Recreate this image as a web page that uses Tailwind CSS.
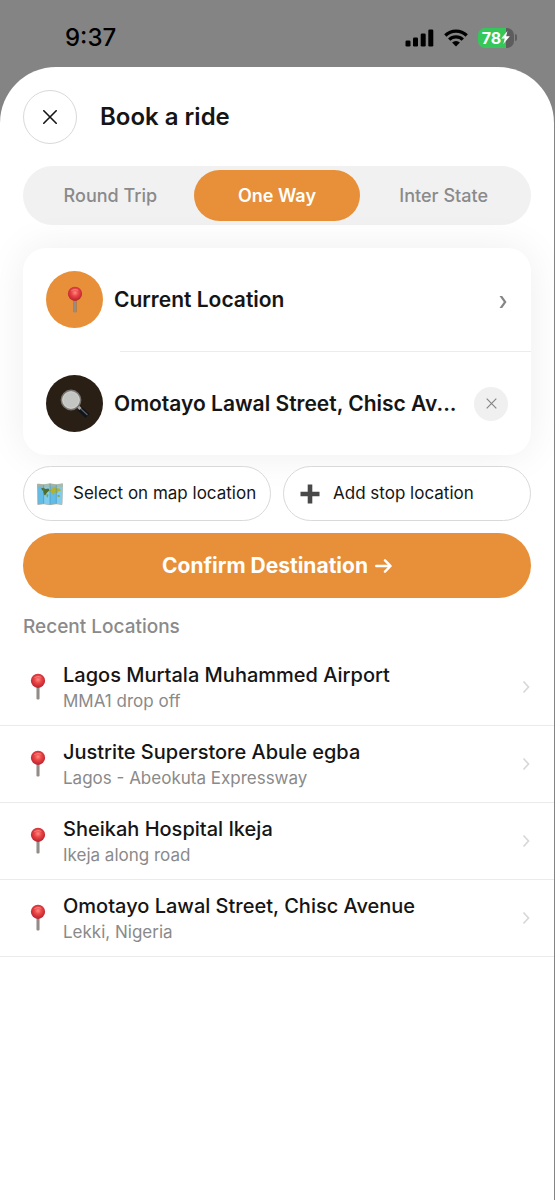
<!DOCTYPE html>
<html lang="en">
<head>
<meta charset="utf-8">
<meta name="viewport" content="width=device-width, initial-scale=1">
<title>Book a ride</title>
<script src="https://cdn.jsdelivr.net/npm/@tailwindcss/browser@4"></script>
</head>
<body class="bg-[#848484] font-['Inter','Liberation_Sans',sans-serif] text-[#151515] antialiased">
<svg class="absolute size-0" aria-hidden="true">
  <defs>
    <radialGradient id="ball" cx="0.5" cy="0.42" r="0.6">
      <stop offset="0" stop-color="#ff8a80"/><stop offset="0.4" stop-color="#ec4747"/><stop offset="1" stop-color="#b51d2c"/>
    </radialGradient>
    <linearGradient id="needle" x1="0" x2="1" y1="0" y2="0">
      <stop offset="0" stop-color="#6e6763"/><stop offset="0.5" stop-color="#aaa29c"/><stop offset="1" stop-color="#6a625e"/>
    </linearGradient>
    <symbol id="pin" viewBox="0 0 16 28">
      <rect x="6.6" y="12" width="2.8" height="14.500" rx="0.8" fill="url(#needle)"/>
      <circle cx="8" cy="7.800" r="7.100" fill="url(#ball)"/>
      <path d="M4.6 4.500Q8 2 11 4.100" fill="none" stroke="#ffb3ab" stroke-width="1" stroke-linecap="round" opacity="0.5"/>
    </symbol>
    <symbol id="chevron" viewBox="0 0 10 14">
      <path d="M2.500 1.500L7.500 7l-5 5.500" fill="none" stroke="currentColor" stroke-width="1.700"/>
    </symbol>
  </defs>
</svg>
<div class="flex min-h-screen flex-col">
  <header class="flex h-[67px] items-center justify-between pt-2 pr-[38px] pl-[65px] text-black">
    <time class="text-2xl font-medium">9:37</time>
    <div class="flex items-center gap-[10px]">
      <svg class="h-[18px] w-[29px]" viewBox="0 0 29 18" fill="currentColor" aria-label="Signal"><rect x="0.500" y="11.500" width="5" height="6" rx="1.300"/><rect x="8" y="8.500" width="5" height="9" rx="1.300"/><rect x="15.700" y="4.500" width="5" height="13" rx="1.300"/><rect x="23.300" y="0.500" width="5" height="17" rx="1.300"/></svg>
      <svg class="h-[18px] w-6" viewBox="0 0 24 18" aria-label="Wi-Fi"><path d="M1.300 6.500a15.300 15.300 0 0 1 21.400 0M5.200 10.600a9.700 9.700 0 0 1 13.600 0" fill="none" stroke="currentColor" stroke-width="3.300"/><path d="M8.100 13.500a5.500 5.500 0 0 1 7.800 0L12 17.500Z" fill="currentColor"/></svg>
      <div class="flex items-center gap-px">
        <div class="flex h-5 w-9 items-center justify-center rounded-[7px] bg-linear-to-r from-[#35c759] from-78% to-[#5d5d5d] to-78% text-base font-bold text-white">78<svg class="h-[13px] w-[9px]" viewBox="0 0 8 12" fill="currentColor" aria-hidden="true"><path d="M5.800 0L0 7h3.300L2 12l6-7.200H4.600Z"/></svg></div>
        <div class="h-[7px] w-[2px] rounded-r-full bg-[#5d5d5d]"></div>
      </div>
    </div>
  </header>

  <main class="mr-px flex grow flex-col rounded-t-[56px] bg-white pt-[23px]">
    <div class="flex items-center gap-[23px] px-[23px]">
      <button class="flex size-[54px] items-center justify-center rounded-full border border-[#d9d9d9]" aria-label="Close">
        <svg class="size-[14px]" viewBox="0 0 14 14" fill="none" stroke="currentColor" stroke-width="1.600" stroke-linecap="round"><path d="M0.800 0.800l12.400 12.400M13.200 0.800L0.800 13.200"/></svg>
      </button>
      <h1 class="text-2xl font-semibold">Book a ride</h1>
    </div>

    <div class="mx-[23px] mt-[22px] grid h-[59px] grid-cols-3 rounded-full bg-[#f1f1f1] p-1 text-lg font-medium text-[#8a8a8a]" role="tablist">
      <button role="tab" aria-selected="false">Round Trip</button>
      <button role="tab" aria-selected="true" class="rounded-full bg-[#e79039] font-semibold text-white">One Way</button>
      <button role="tab" aria-selected="false">Inter State</button>
    </div>

    <section class="mx-[23px] mt-[23px] rounded-[23px] bg-white shadow-[0_0_40px_rgba(0,0,0,0.07)]">
      <button class="flex w-full items-center gap-[11px] p-[23px] text-left text-[21px] font-semibold">
        <span class="flex size-[57px] shrink-0 items-center justify-center rounded-full bg-[#e79039]"><svg class="h-7 w-4"><use href="#pin"/></svg></span>
        <span class="grow">Current Location</span>
        <svg class="mt-1 h-[14px] w-[10px] text-[#858585]" viewBox="0 0 10 14"><path d="M1.500 1h2.700l4.300 6-4.300 6H1.500L5.800 7Z" fill="currentColor"/></svg>
      </button>
      <div class="ml-[97px] border-t border-[#ececec]"></div>
      <div class="flex items-center gap-[11px] p-[23px]">
        <span class="flex size-[57px] shrink-0 items-center justify-center rounded-full bg-[#2a1f15]">
          <svg class="size-[30px]" viewBox="0 0 30 30" aria-hidden="true">
            <path d="M19.500 19.500l8 7.500" stroke="#101318" stroke-width="5.500"/>
            <path d="M19.500 18.500l8 7.500" stroke="#59606b" stroke-width="1.300"/>
            <path d="M17.500 17l3 3" stroke="#aaa" stroke-width="3"/>
            <circle cx="11" cy="11" r="9.500" fill="#c3c5c3" stroke="#77736f" stroke-width="1.800"/>
            <circle cx="11" cy="11" r="8.400" fill="none" stroke="#dededc" stroke-width="0.700"/>
          </svg>
        </span>
        <input class="min-w-0 grow text-[21px] font-semibold outline-none" type="text" aria-label="Destination" value="Omotayo Lawal Street, Chisc Av...">
        <button class="flex size-[34px] shrink-0 items-center justify-center rounded-full bg-[#f0f0f0] text-[#858585]" aria-label="Clear destination">
          <svg class="size-[11px]" viewBox="0 0 11 11" fill="none" stroke="currentColor" stroke-width="1.200"><path d="M0.700 0.700l9.600 9.600M10.300 0.700L0.700 10.300"/></svg>
        </button>
      </div>
    </section>

    <div class="mx-[23px] mt-[11px] grid grid-cols-2 gap-3 text-[17px]">
      <button class="flex h-[55px] items-center gap-[10px] rounded-full border border-[#d9d9d9] bg-white pl-[13px] whitespace-nowrap">
        <svg class="h-[22px] w-[26px] shrink-0" viewBox="0 0 26 22" aria-hidden="true">
          <path d="M0.500 1l6.200.8L13 .8l6.300 1L25.500.8 25 21.500l-5.700-.7-6.300.9-6.300-.9L.8 21.500Z" fill="#62bce6" stroke="#a9a18e" stroke-width="0.700"/>
          <path d="M6.700 1.800L13 .8v20.900l-6.300-.9ZM19.300 1.800L25.500.8 25 21.500l-5.700-.7Z" fill="#93d8f3" opacity="0.600"/>
          <path d="M.6 1l6.100.8L13 .8l6.300 1L25.500.8v3H.6Z" fill="#c1b184" opacity="0.600"/>
          <path d="M4 5.500l2.500-.8L8.500 6l3-.5 1 2-2 1.500-1.500 2-1 1.500-1-1L6 8Z" fill="#526b28"/>
          <path d="M13.500 6L17 4.800l5.500.7 1.500 2-3 1-1 2-1.500-1.500-1 .5-1 3.500-1.500-3-2.500-1.500Z" fill="#b5b12c"/>
          <path d="M9.500 11l2 .8-1 3-1-1.500ZM20.500 12l2.500.5-.5 1.500-2-.5Z" fill="#8ca02b"/>
          <path d="M6.700 1.800v19M13 .8v20.900M19.300 1.800v19" stroke="#4189b3" stroke-width="0.500"/>
        </svg>
        <span>Select on map location</span>
      </button>
      <button class="flex h-[55px] items-center gap-[13px] rounded-full border border-[#d9d9d9] bg-white pl-4 whitespace-nowrap">
        <svg class="size-5 shrink-0" viewBox="0 0 20 20" aria-hidden="true"><path d="M7.700.5h4.600v7.200h7.200v4.600h-7.200v7.200H7.700v-7.200H.5V7.700h7.200Z" fill="#494949"/></svg>
        <span>Add stop location</span>
      </button>
    </div>

    <button class="mx-[23px] mt-3 flex h-[65px] items-center justify-center gap-[7px] rounded-full bg-[#e79039] text-[21px] font-bold text-white">Confirm Destination
      <svg class="h-[14px] w-[17px]" viewBox="0 0 17 14" fill="none" stroke="currentColor" stroke-width="2.400" stroke-linecap="round" stroke-linejoin="round" aria-hidden="true"><path d="M1.200 7h14.200M10 1.300L15.600 7 10 12.700"/></svg>
    </button>

    <h2 class="mt-[17px] px-[23px] text-[19px]/6 font-medium text-[#8a8a8a]">Recent Locations</h2>
    <ul class="mt-[10px]">
      <li class="border-b border-[#ebebeb]"><a href="#" class="flex h-[76px] items-center pr-[23px] pl-[30px]"><svg class="h-7 w-4"><use href="#pin"/></svg><span class="ml-[17px] flex grow flex-col"><span class="text-xl/7 font-medium">Lagos Murtala Muhammed Airport</span><span class="text-[17px]/6 text-[#8a8a8a]">MMA1 drop off</span></span><svg class="h-[14px] w-[10px] text-[#d8d8d8]"><use href="#chevron"/></svg></a></li>
      <li class="border-b border-[#ebebeb]"><a href="#" class="flex h-[76px] items-center pr-[23px] pl-[30px]"><svg class="h-7 w-4"><use href="#pin"/></svg><span class="ml-[17px] flex grow flex-col"><span class="text-xl/7 font-medium">Justrite Superstore Abule egba</span><span class="text-[17px]/6 text-[#8a8a8a]">Lagos - Abeokuta Expressway</span></span><svg class="h-[14px] w-[10px] text-[#d8d8d8]"><use href="#chevron"/></svg></a></li>
      <li class="border-b border-[#ebebeb]"><a href="#" class="flex h-[76px] items-center pr-[23px] pl-[30px]"><svg class="h-7 w-4"><use href="#pin"/></svg><span class="ml-[17px] flex grow flex-col"><span class="text-xl/7 font-medium">Sheikah Hospital Ikeja</span><span class="text-[17px]/6 text-[#8a8a8a]">Ikeja along road</span></span><svg class="h-[14px] w-[10px] text-[#d8d8d8]"><use href="#chevron"/></svg></a></li>
      <li class="border-b border-[#ebebeb]"><a href="#" class="flex h-[76px] items-center pr-[23px] pl-[30px]"><svg class="h-7 w-4"><use href="#pin"/></svg><span class="ml-[17px] flex grow flex-col"><span class="text-xl/7 font-medium">Omotayo Lawal Street, Chisc Avenue</span><span class="text-[17px]/6 text-[#8a8a8a]">Lekki, Nigeria</span></span><svg class="h-[14px] w-[10px] text-[#d8d8d8]"><use href="#chevron"/></svg></a></li>
    </ul>
  </main>
</div>
</body>
</html>
